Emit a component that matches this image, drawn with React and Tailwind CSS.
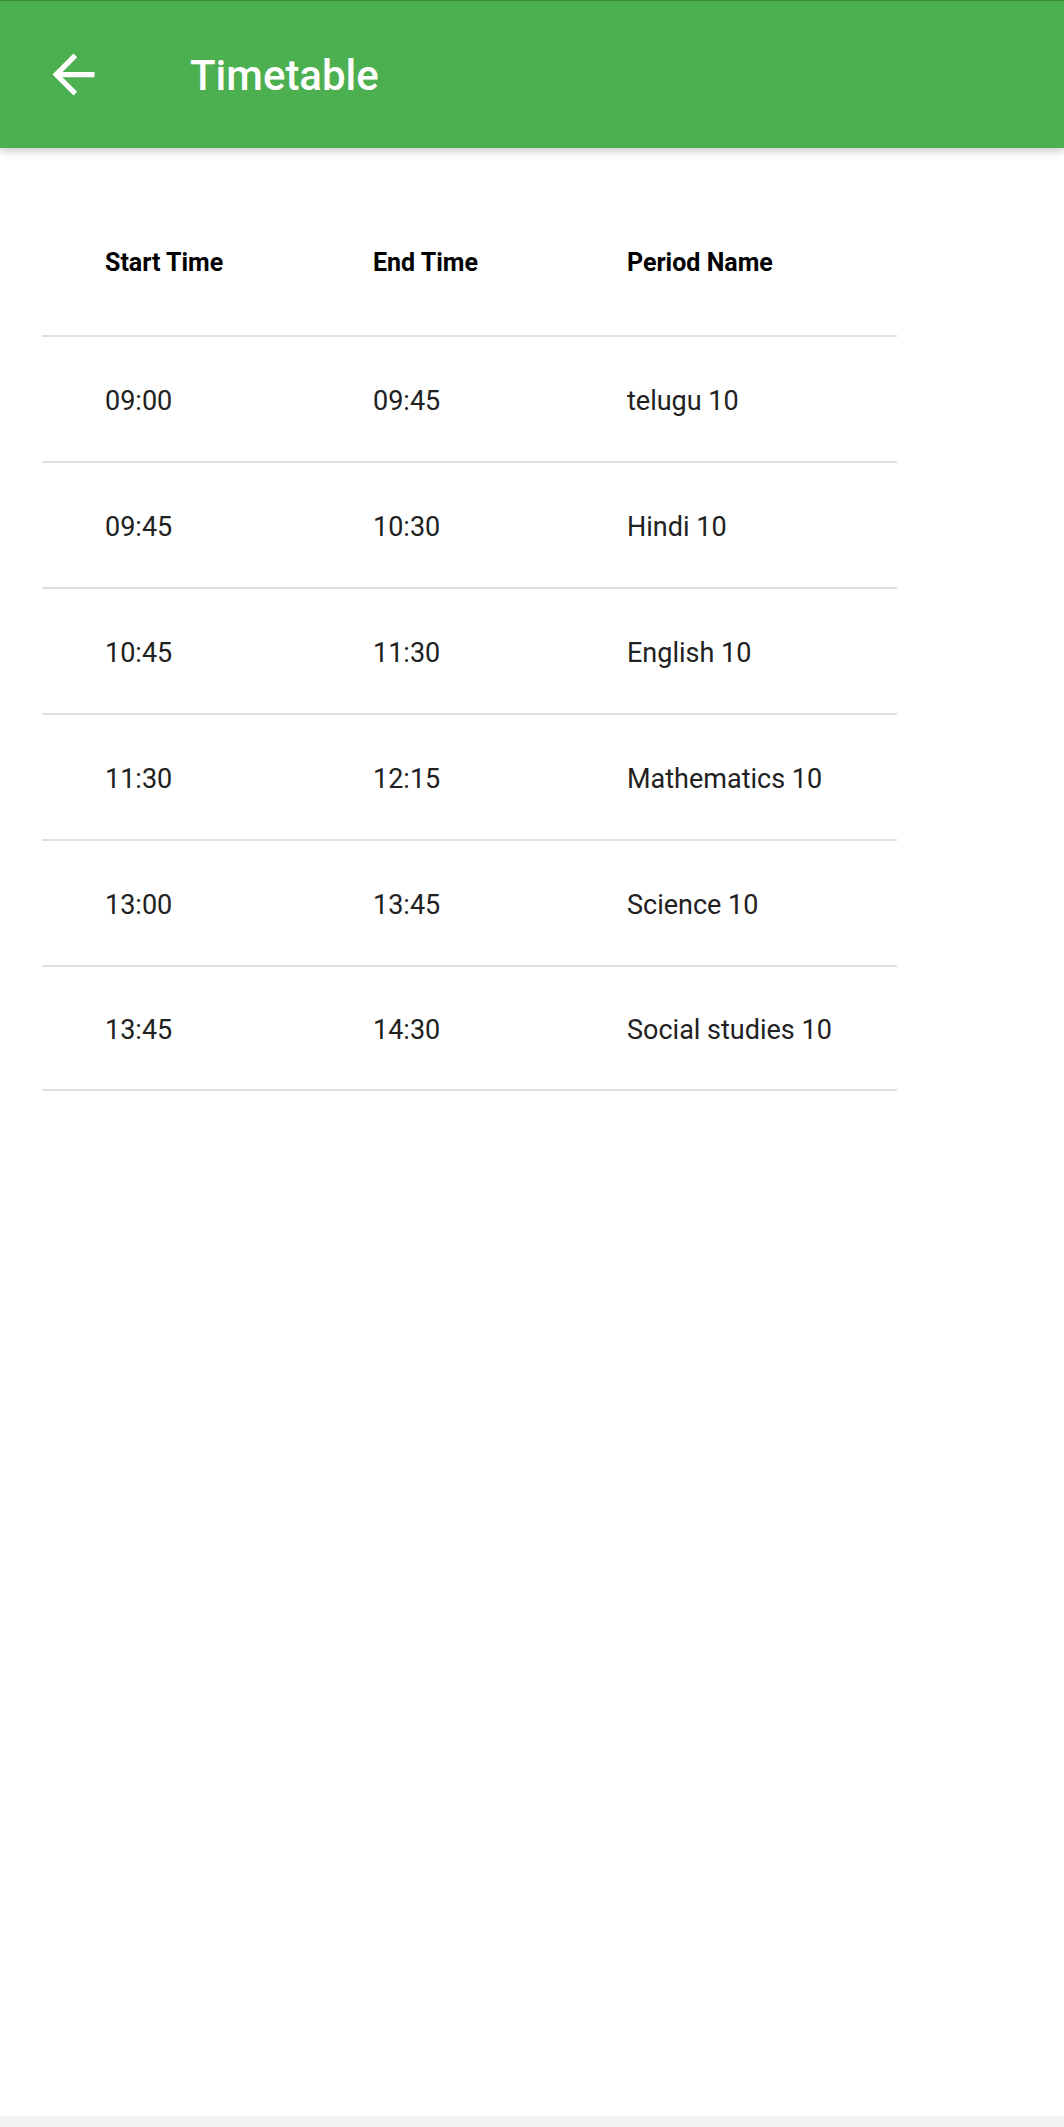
import React from "react";

const rows = [
  ["09:00", "09:45", "telugu 10"],
  ["09:45", "10:30", "Hindi 10"],
  ["10:45", "11:30", "English 10"],
  ["11:30", "12:15", "Mathematics 10"],
  ["13:00", "13:45", "Science 10"],
  ["13:45", "14:30", "Social studies 10"],
];

export default function App() {
  return (
    <div
      className="w-[1064px] h-[2127px] flex flex-col bg-white overflow-hidden"
      style={{ fontFamily: "Roboto, 'Noto Sans', sans-serif" }}
    >
      <header className="relative z-10 h-[148px] shrink-0 bg-[#4caf50] border-t border-[#3a8a3e] flex items-center shadow-[0_3px_8px_rgba(0,0,0,0.22)]">
        <button className="ml-[42px] w-[63px] h-[63px] flex items-center justify-center">
          <svg viewBox="0 0 24 24" width="63" height="63" fill="#ffffff">
            <path d="M20 11H7.83l5.59-5.59L12 4l-8 8 8 8 1.41-1.41L7.83 13H20v-2z" />
          </svg>
        </button>
        <h1 className="ml-[85px] text-white text-[42px] font-medium leading-none pt-[2px]">
          Timetable
        </h1>
      </header>

      <main className="flex-1">
        <div className="ml-[42px] mt-[40px] w-[855px]">
          <div className="h-[147px] pl-[63px] pt-[2px] grid grid-cols-[268px_254px_1fr] items-center text-[25px] font-bold text-black">
            <div>Start Time</div>
            <div>End Time</div>
            <div>Period Name</div>
          </div>
          {rows.map((r, i) => (
            <div
              key={i}
              className={
                "h-[126px] pl-[63px] pt-[5px] grid grid-cols-[268px_254px_1fr] items-center text-[27px] text-[#212121] border-t-2 border-[#e0e0e0]" +
                (i === rows.length - 1 ? " border-b-2" : "")
              }
            >
              <div>{r[0]}</div>
              <div>{r[1]}</div>
              <div>{r[2]}</div>
            </div>
          ))}
        </div>
      </main>

      <div className="h-[11px] shrink-0 bg-[#f1f1f1]" />
    </div>
  );
}
